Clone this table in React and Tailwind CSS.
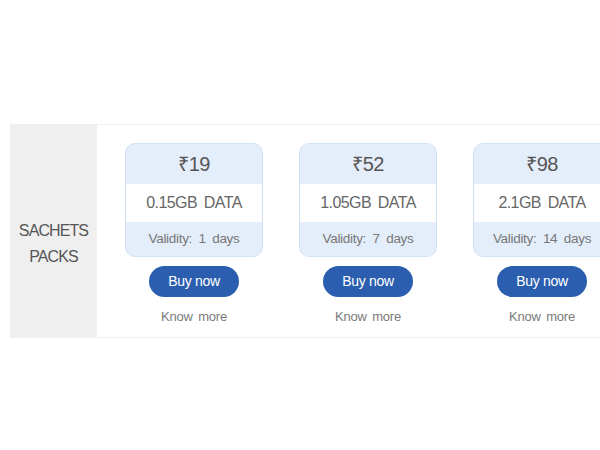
import React from "react";

const packs = [
    { price: "19", data: "0.15GB DATA", validity: "Validity: 1 days" },
    { price: "52", data: "1.05GB DATA", validity: "Validity: 7 days" },
    { price: "98", data: "2.1GB DATA", validity: "Validity: 14 days" },
];

const App = () => {
    return (
        <div className="w-[600px] h-[450px] overflow-hidden bg-white font-['Liberation_Sans',Arial,sans-serif]">
            <div className="mt-[124px] ml-[10px] w-[620px] h-[214px] flex border-y border-[#f1f1f1] bg-white">
                {/* --- Label column --- */}
                <div className="w-[87px] shrink-0 bg-[#efefef] flex flex-col items-center justify-center text-[16px] leading-[26px] text-[#555] pt-[26px] tracking-[-0.9px]">
                    <span>SACHETS</span>
                    <span>PACKS</span>
                </div>

                {/* --- Pack cards --- */}
                <div className="flex gap-[36px] pl-[28px] pt-[18px]">
                    {packs.map((pack, index) => (
                        <div key={index} className="w-[138px] shrink-0 flex flex-col items-center">
                            <div className="w-full rounded-[10px] border border-[#d3e2f2] bg-[#e4eefa] overflow-hidden text-center">
                                <div className="h-[40px] flex items-center justify-center text-[20px] text-[#555] tracking-[-0.5px]">
                                    ₹{pack.price}
                                </div>
                                <div className="h-[38px] bg-white flex items-center justify-center text-[16px] text-[#666] [word-spacing:3px] tracking-[-0.6px]">
                                    {pack.data}
                                </div>
                                <div className="h-[34px] flex items-center justify-center text-[13.5px] text-[#777] [word-spacing:3px] tracking-[-0.3px]">
                                    {pack.validity}
                                </div>
                            </div>
                            <button className="mt-[9px] w-[90px] h-[31px] rounded-full bg-[#2b5eae] text-white text-[14px] tracking-[-0.3px]">
                                Buy now
                            </button>
                            <a className="mt-[12px] text-[13px] leading-[16px] text-[#7a7a7a] [word-spacing:2px] tracking-[-0.2px]">
                                Know more
                            </a>
                        </div>
                    ))}
                </div>
            </div>
        </div>
    );
};

export default App;
